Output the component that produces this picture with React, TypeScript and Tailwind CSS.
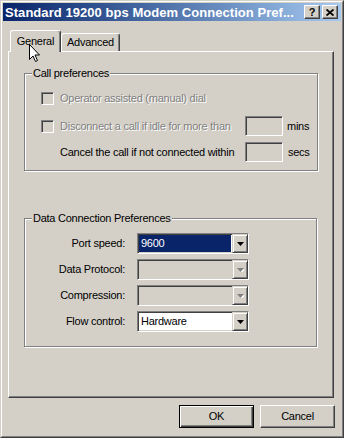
import React from "react";

const raised =
  "border border-t-white border-l-white border-r-[#404040] border-b-[#404040] shadow-[inset_-1px_-1px_0_#808080]";
const sunken =
  "border border-t-[#808080] border-l-[#808080] border-r-white border-b-white shadow-[inset_1px_1px_0_#404040,inset_-1px_-1px_0_#d4d0c8]";
const disabledText = "text-[#808080] [text-shadow:1px_1px_0_#fff]";

function Arrow({ disabled }: { disabled?: boolean }) {
  return (
    <div
      className={
        "w-[16px] h-full flex items-center justify-center bg-[#d4d0c8] border border-t-[#d4d0c8] border-l-[#d4d0c8] border-r-[#404040] border-b-[#404040] shadow-[inset_1px_1px_0_#fff,inset_-1px_-1px_0_#808080]"
      }
    >
      <svg width="7" height="4" viewBox="0 0 7 4">
        {disabled && <polygon points="1,1 8,1 4.5,5" fill="#fff" />}
        <polygon points="0,0 7,0 3.5,4" fill={disabled ? "#808080" : "#000"} />
      </svg>
    </div>
  );
}

function Combo({
  value,
  selected,
  disabled,
}: {
  value?: string;
  selected?: boolean;
  disabled?: boolean;
}) {
  return (
    <div
      className={
        "w-[112px] h-[21px] flex " +
        sunken +
        (disabled ? " bg-[#d4d0c8]" : " bg-white")
      }
    >
      <div className="flex-1 flex p-px pl-px">
        {value && (
          <div
            className={
              "flex-1 flex items-center pl-[2px] text-[11px] leading-none " +
              (selected ? "bg-[#0a246a] text-white" : "text-black")
            }
          >
            {value}
          </div>
        )}
      </div>
      <Arrow disabled={disabled} />
    </div>
  );
}

function Group({
  label,
  className,
  children,
}: {
  label: string;
  className?: string;
  children: React.ReactNode;
}) {
  return (
    <div
      className={
        "relative border border-[#808080] shadow-[inset_1px_1px_0_#fff,1px_1px_0_#fff] " +
        (className || "")
      }
    >
      <div className="absolute -top-[8px] left-[7px] px-px bg-[#d4d0c8] text-[11px] leading-[14px] text-black">
        {label}
      </div>
      {children}
    </div>
  );
}

function CheckBox() {
  return <div className={"w-[13px] h-[13px] bg-[#d4d0c8] " + sunken} />;
}

function SmallInput() {
  return <div className={"w-[38px] h-[20px] bg-[#d4d0c8] " + sunken} />;
}

function ComboRow({
  label,
  children,
}: {
  label: string;
  children: React.ReactNode;
}) {
  return (
    <div className="flex items-center h-[21px]">
      <div className="w-[100px] text-right text-[11px] text-black pr-0">{label}</div>
      <div className="ml-[12px]">{children}</div>
    </div>
  );
}

export default function App() {
  return (
    <div className="relative w-[344px] h-[438px] flex flex-col bg-[#d4d0c8] border border-t-[#d4d0c8] border-l-[#d4d0c8] border-r-[#404040] border-b-[#404040] font-['Liberation_Sans',Arial,sans-serif] tracking-[-0.25px] select-none overflow-hidden">
      <div className="flex-1 flex flex-col p-px border border-t-white border-l-white border-r-[#808080] border-b-[#808080]">
        {/* Title bar */}
        <div className="h-[18px] flex items-center bg-gradient-to-r from-[#0a246a] to-[#a6caf0]">
          <div className="flex-1 pl-[2px] text-white font-bold text-[13px] leading-none whitespace-nowrap overflow-hidden tracking-[0.05px]">
            Standard 19200 bps Modem Connection Pref...
          </div>
          <div className="flex items-center gap-[2px] pr-[3px]">
            <div
              className={
                "w-[16px] h-[14px] bg-[#d4d0c8] flex items-center justify-center text-[11px] font-bold leading-none text-black " +
                raised
              }
            >
              ?
            </div>
            <div
              className={
                "w-[16px] h-[14px] bg-[#d4d0c8] flex items-center justify-center " +
                raised
              }
            >
              <svg width="8" height="7" viewBox="0 0 8 7">
                <path d="M0.5 0.5 L7.5 6.5 M7.5 0.5 L0.5 6.5" stroke="#000" strokeWidth="1.8" />
              </svg>
            </div>
          </div>
        </div>

        {/* Body */}
        <div className="flex flex-col pl-[5px] pr-[7px] mt-[9px]">
          {/* Tabs */}
          <div className="h-[21px] flex items-end pl-[2px]">
            <div className="relative z-10 -mb-px h-[22px] w-[51px] bg-[#d4d0c8] border-t border-l border-r border-t-white border-l-white border-r-[#404040] rounded-t-[3px] shadow-[inset_-1px_0_0_#808080] flex justify-center pt-[4px] text-[11px] leading-[13px] text-black">
              General
            </div>
            <div className="h-[18px] w-[59px] bg-[#d4d0c8] border-t border-l border-r border-t-white border-l-white border-r-[#404040] rounded-t-[3px] shadow-[inset_-1px_0_0_#808080] flex justify-center pt-[2px] text-[11px] leading-[13px] text-black">
              Advanced
            </div>
          </div>
          {/* Panel */}
          <div className="h-[347px] w-[326px] bg-[#d4d0c8] border border-t-white border-l-white border-r-[#404040] border-b-[#404040] shadow-[inset_-1px_-1px_0_#808080] pl-[15px] pt-[21px]">
            <Group label="Call preferences" className="w-[294px] h-[98px] pl-[16px] pt-[14px]">
              <div className="flex items-center h-[20px]">
                <div className="w-[19px]">
                  <CheckBox />
                </div>
                <div className={"text-[11px] " + disabledText}>
                  Operator assisted (manual) dial
                </div>
              </div>
              <div className="flex items-center h-[20px] mt-[8px]">
                <div className="w-[19px]">
                  <CheckBox />
                </div>
                <div className={"w-[185px] text-[11px] whitespace-nowrap " + disabledText}>
                  Disconnect a call if idle for more than
                </div>
                <SmallInput />
                <div className="ml-[4px] text-[11px] text-black">mins</div>
              </div>
              <div className="flex items-center h-[20px] mt-[6px]">
                <div className="w-[19px]" />
                <div className="w-[185px] text-[11px] whitespace-nowrap text-black">
                  Cancel the call if not connected within
                </div>
                <SmallInput />
                <div className="ml-[5px] text-[11px] text-black">secs</div>
              </div>
            </Group>

            <Group
              label="Data Connection Preferences"
              className="mt-[47px] w-[293px] h-[129px] pt-[14px] flex flex-col gap-[5px]"
            >
              <ComboRow label="Port speed:">
                <Combo value="9600" selected />
              </ComboRow>
              <ComboRow label="Data Protocol:">
                <Combo disabled />
              </ComboRow>
              <ComboRow label="Compression:">
                <Combo disabled />
              </ComboRow>
              <ComboRow label="Flow control:">
                <Combo value="Hardware" />
              </ComboRow>
            </Group>
          </div>

          {/* Buttons */}
          <div className="mt-[7px] flex justify-end gap-[6px] -mr-[1px]">
            <div className="w-[75px] h-[23px] border border-black bg-[#d4d0c8] shadow-[inset_1px_1px_0_#fff,inset_-1px_-1px_0_#404040,inset_-2px_-2px_0_#808080] flex items-center justify-center text-[11px] text-black">
              OK
            </div>
            <div
              className={
                "w-[75px] h-[23px] bg-[#d4d0c8] flex items-center justify-center text-[11px] text-black " +
                raised
              }
            >
              Cancel
            </div>
          </div>
        </div>
      </div>

      {/* Mouse cursor */}
      <svg
        className="absolute left-[28px] top-[43px] z-20"
        width="12"
        height="19"
        viewBox="0 0 12 19"
      >
        <polygon
          points="0.5,0.5 0.5,15.5 4,12 6.5,17.5 8.5,16.5 6,11 10.5,11"
          fill="#fff"
          stroke="#000"
          strokeWidth="1"
        />
      </svg>
    </div>
  );
}
